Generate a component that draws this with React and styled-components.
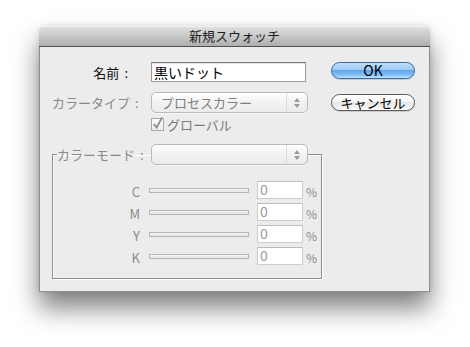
import React from 'react';
import styled, { createGlobalStyle } from 'styled-components';

const Global = createGlobalStyle`
  html, body { margin: 0; padding: 0; background: #fff; width: 470px; height: 347px; overflow: hidden; }
  body { font-family: "Noto Sans CJK JP", "Noto Sans", sans-serif; }
  * { box-sizing: border-box; }
`;

const Window = styled.div`
  margin: 26px 0 0 39px;
  width: 391px;
  height: 266px;
  display: flex;
  flex-direction: column;
  border-radius: 4px 4px 0 0;
  box-shadow: 0 16px 26px rgba(0, 0, 0, 0.5), 0 0 5px rgba(0, 0, 0, 0.12);
`;

const TitleBar = styled.div`
  height: 21px;
  flex: none;
  border-radius: 4px 4px 0 0;
  background: linear-gradient(#e2e2e2 0%, #cbcbcb 45%, #afafaf 100%);
  border-bottom: 1px solid #4e4e4e;
  box-shadow: inset 0 1px 0 #f2f2f2;
  text-align: center;
  font-size: 13px;
  line-height: 20px;
  color: #1e1e1e;
`;

const Body = styled.div`
  flex: 1;
  display: flex;
  background: #ececec;
  border: 1px solid #8e8e8e;
  border-top: none;
  padding-top: 15px;
`;

const Form = styled.div`
  width: 282px;
  padding-left: 12px;
  display: flex;
  flex-direction: column;
`;

const Row = styled.div`
  display: flex;
  align-items: center;
  margin-top: ${p => p.$mt || 0}px;
`;

const Label = styled.div`
  width: 99px;
  flex: none;
  text-align: right;
  padding-right: ${p => p.$pr || 0}px;
  font-size: 13px;
  color: ${p => (p.$disabled ? '#8a8a8a' : '#111')};
  white-space: nowrap;
`;

const Colon = styled.span`
  margin-left: 5px;
`;

const TextInput = styled.div`
  width: 155px;
  height: 20px;
  background: #fff;
  border: 1px solid #9a9a9a;
  border-top-color: #7a7a7a;
  font-size: 14px;
  line-height: 18px;
  padding-left: 2px;
  color: #000;
  box-shadow: inset 0 1px 0 #e4e4e4;
`;

const SelectBox = styled.div`
  width: 157px;
  height: 21px;
  flex: none;
  display: flex;
  border: 1px solid #b9b9b9;
  border-radius: 5px;
  background: linear-gradient(#fefefe, #f1f1f1 55%, #ebebeb);
  box-shadow: 0 1px 0 #f8f8f8;
`;

const SelectText = styled.div`
  flex: 1;
  font-size: 13px;
  line-height: 19px;
  padding-left: 9px;
  color: #7e7e7e;
  border-right: 1px solid #dadada;
`;

const SelectArrows = styled.div`
  width: 20px;
  display: flex;
  align-items: center;
  justify-content: center;
`;

const Check = styled.div`
  width: 13px;
  height: 13px;
  margin-left: 99px;
  border: 1px solid #a9a9a9;
  background: linear-gradient(#fdfdfd, #ececec);
  display: flex;
  align-items: flex-end;
  justify-content: center;
`;

const CheckLabel = styled.div`
  margin-left: 3px;
  font-size: 13px;
  line-height: 13px;
  color: #7a7a7a;
`;

const Group = styled.fieldset`
  margin: 13px 0 0 0;
  padding: 0 0 13px 4px;
  width: 270px;
  border: 1px solid #8f8f8f;
  box-shadow: inset 1px 1px 0 #fff, 1px 1px 0 #fff;
  min-width: 0;
`;

const Legend = styled.legend`
  padding: 0;
  display: flex;
  align-items: center;
`;

const LegendLabel = styled.div`
  width: 94px;
  font-size: 13px;
  color: #8a8a8a;
  white-space: nowrap;
`;

const Channels = styled.div`
  margin-top: 16px;
  margin-left: -4px;
  display: flex;
  flex-direction: column;
  gap: 4px;
`;

const ChannelRow = styled.div`
  display: flex;
  align-items: center;
  height: 18px;
`;

const ChannelLetter = styled.div`
  width: 87px;
  text-align: right;
  font-size: 13px;
  color: #8a8a8a;
  padding-top: 2px;
`;

const Track = styled.div`
  margin-left: 9px;
  width: 100px;
  height: 5px;
  border: 1px solid #b4b4b4;
  background: #e8e8e8;
  box-shadow: inset 0 1px 0 #f6f6f6;
`;

const ValueBox = styled.div`
  margin-left: 8px;
  width: 46px;
  height: 18px;
  background: #fff;
  border: 1px solid #cdcdcd;
  border-top-color: #bdbdbd;
  font-size: 14px;
  line-height: 15px;
  padding-left: 2px;
  color: #9a9a9a;
`;

const Percent = styled.div`
  margin-left: 3px;
  font-size: 12px;
  color: #8a8a8a;
  padding-top: 3px;
`;

const Buttons = styled.div`
  margin-left: 9px;
  width: 84px;
  display: flex;
  flex-direction: column;
  gap: 15px;
`;

const Button = styled.div`
  height: 17px;
  border-radius: 9px;
  text-align: center;
  font-size: ${p => (p.$primary ? 14 : 13)}px;
  line-height: 15px;
  color: #000;
  border: 1px solid ${p => (p.$primary ? '#3a67a3' : '#5a5a5a')};
  background: ${p =>
    p.$primary
      ? 'linear-gradient(#c2e0fb 0%, #99c9f5 45%, #5fa6ec 50%, #82c0f5 80%, #bfe5ff 100%)'
      : 'linear-gradient(#ffffff 0%, #f6f6f6 45%, #e6e6e6 50%, #f1f1f1 80%, #ffffff 100%)'};
  box-shadow: 0 1px 1px rgba(0, 0, 0, 0.15);
`;

const Arrows = () => (
  <svg width="8" height="12" viewBox="0 0 8 12">
    <path d="M4 1 L7 5 L1 5 Z" fill="#9a9a9a" />
    <path d="M4 11 L7 7 L1 7 Z" fill="#9a9a9a" />
  </svg>
);

const Select = ({ children }) => (
  <SelectBox>
    <SelectText>{children}</SelectText>
    <SelectArrows>
      <Arrows />
    </SelectArrows>
  </SelectBox>
);

const channels = ['C', 'M', 'Y', 'K'];

export default function App() {
  return (
    <>
      <Global />
      <Window>
        <TitleBar>新規スウォッチ</TitleBar>
        <Body>
          <Form>
            <Row>
              <Label $pr={23}>名前<Colon>:</Colon></Label>
              <TextInput>黒いドット</TextInput>
            </Row>
            <Row $mt={10}>
              <Label $pr={13} $disabled>カラータイプ<Colon>:</Colon></Label>
              <Select>プロセスカラー</Select>
            </Row>
            <Row $mt={5}>
              <Check>
                <svg width="12" height="13" viewBox="0 0 12 13">
                  <path d="M2 7 L5 11 L11 0" stroke="#8c8c8c" strokeWidth="2" fill="none" />
                </svg>
              </Check>
              <CheckLabel>グローバル</CheckLabel>
            </Row>
            <Group>
              <Legend>
                <LegendLabel>カラーモード<Colon>:</Colon></LegendLabel>
                <Select>&nbsp;</Select>
              </Legend>
              <Channels>
                {channels.map(c => (
                  <ChannelRow key={c}>
                    <ChannelLetter>{c}</ChannelLetter>
                    <Track />
                    <ValueBox>0</ValueBox>
                    <Percent>%</Percent>
                  </ChannelRow>
                ))}
              </Channels>
            </Group>
          </Form>
          <Buttons>
            <Button $primary>OK</Button>
            <Button>キャンセル</Button>
          </Buttons>
        </Body>
      </Window>
    </>
  );
}
